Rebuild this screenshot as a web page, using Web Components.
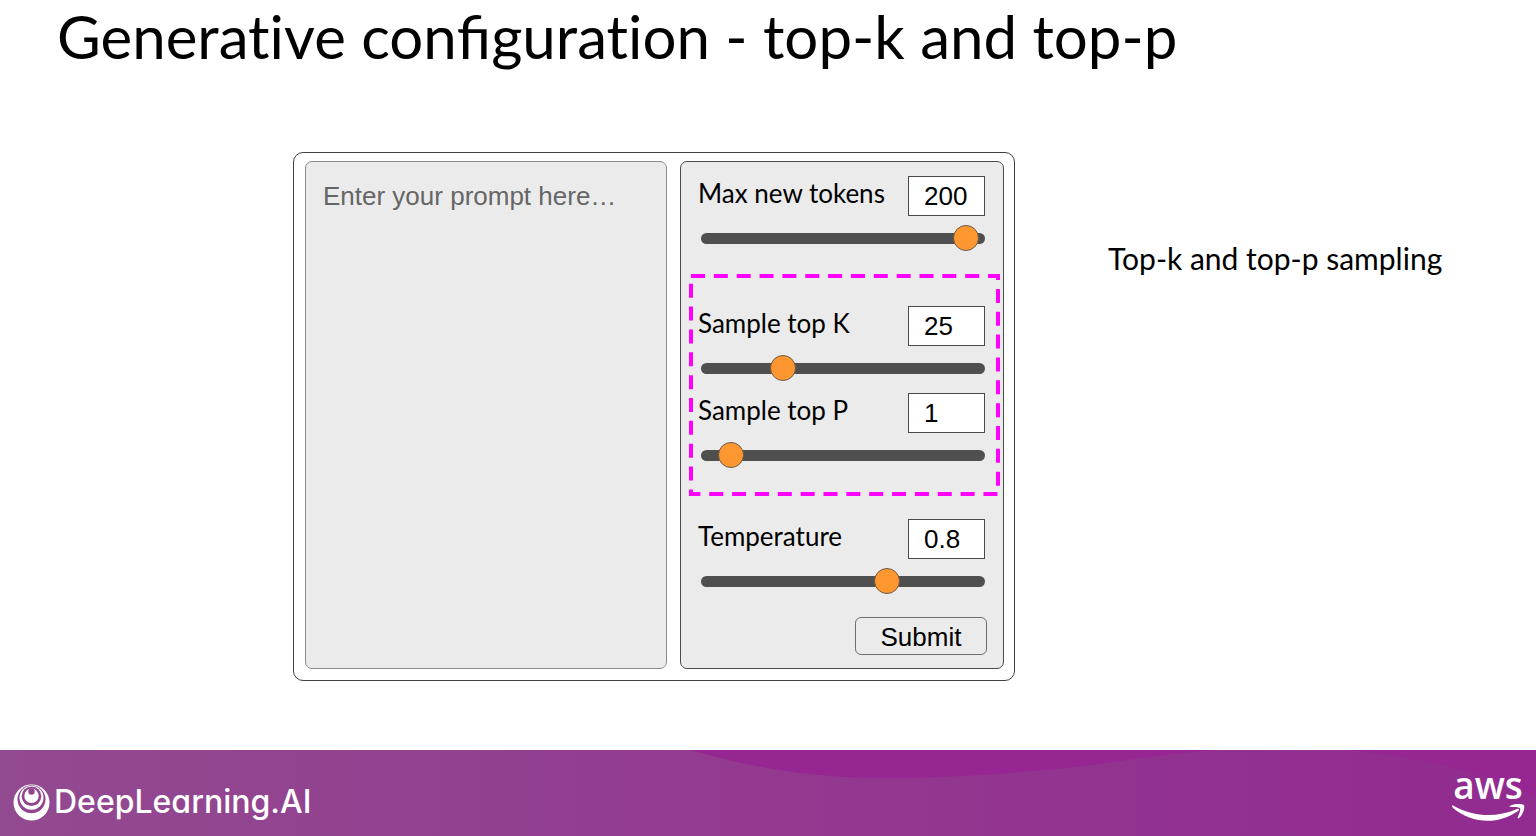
<!DOCTYPE html>
<html lang="en">
<head>
<meta charset="utf-8">
<meta name="viewport" content="width=device-width, initial-scale=1">
<title>Generative configuration - top-k and top-p</title>
<style>
  body { margin: 0; background: #fff; color: #000; font-family: Lato, "Liberation Sans", sans-serif; }
  h1 { font-variant-ligatures: none; }
  h1 span { font-variant-ligatures: normal; }
</style>
</head>
<body>
<config-slide>
  <h1 slot="title">Generative con<span>fi</span>guration - top-k and top-p</h1>
  <prompt-playground slot="figure">
    <prompt-box slot="prompt" placeholder="Enter your prompt here…"></prompt-box>
    <param-slider label="Max new tokens" value="200" max="205"></param-slider>
    <highlight-group>
      <param-slider label="Sample top K" value="25" max="93"></param-slider>
      <param-slider label="Sample top P" value="1" max="15"></param-slider>
    </highlight-group>
    <param-slider label="Temperature" value="0.8" max="1.19"></param-slider>
    <submit-button>Submit</submit-button>
  </prompt-playground>
  <p slot="caption">Top-k and top-p sampling</p>
  <brand-footer slot="footer"></brand-footer>
</config-slide>

<script>
class Base extends HTMLElement {
  constructor() {
    super();
    this.attachShadow({ mode: "open" });
  }
  connectedCallback() {
    this.shadowRoot.innerHTML = this.render();
  }
}

customElements.define("config-slide", class extends Base {
  render() {
    return `
    <style>
      :host { display: flex; flex-direction: column; min-height: 100vh; }
      header { padding: 0 57px; }
      ::slotted(h1) { margin: 0; font-size: 60px; line-height: 72px; font-weight: 400; }
      main {
        flex: 1; display: grid; align-items: start; padding: 80px 0 68px;
        grid-template-columns: 293fr minmax(0, 722fr) 93fr 428fr;
      }
      .figure { grid-column: 2; }
      .caption { grid-column: 4; padding-top: 88px; }
      ::slotted(p) { margin: 0; font-size: 30px; line-height: 36px; }
    </style>
    <header><slot name="title"></slot></header>
    <main>
      <div class="figure"><slot name="figure"></slot></div>
      <div class="caption"><slot name="caption"></slot></div>
    </main>
    <slot name="footer"></slot>`;
  }
});

customElements.define("prompt-playground", class extends Base {
  render() {
    return `
    <style>
      :host {
        display: grid; grid-template-columns: 362fr 324fr; gap: 13px;
        padding: 8px 10px 11px 11px; border: 1px solid #404040; border-radius: 10px; background: #fff;
      }
      section {
        display: flex; flex-direction: column; gap: 23px; padding: 14px 0 13px;
        border: 1px solid #4a4a4a; border-radius: 7px; background: #ebebeb;
      }
      ::slotted(param-slider) { margin: 0 18px 0 17px; }
      ::slotted(submit-button) { align-self: flex-end; margin-right: 16px; }
    </style>
    <slot name="prompt"></slot>
    <section><slot></slot></section>`;
  }
});

customElements.define("prompt-box", class extends Base {
  render() {
    return `
    <style>
      :host { display: grid; }
      textarea {
        box-sizing: border-box; width: 100%; height: 100%; margin: 0; padding: 18px 17px;
        border: 1px solid #8c8c8c; border-radius: 7px; background: #ebebeb; resize: none;
        font: 26px/32px "Liberation Sans", Arial, sans-serif; color: #000;
      }
      textarea::placeholder { color: #666; opacity: 1; }
    </style>
    <textarea aria-label="Prompt" placeholder="${this.getAttribute("placeholder")}"></textarea>`;
  }
});

customElements.define("param-slider", class extends Base {
  render() {
    const label = this.getAttribute("label");
    const value = this.getAttribute("value");
    const max = this.getAttribute("max");
    return `
    <style>
      :host { display: grid; gap: 9px; }
      .head { display: flex; justify-content: space-between; }
      label { font-size: 26px; line-height: 34px; white-space: nowrap; }
      #value {
        box-sizing: border-box; width: 77px; height: 40px; margin: 0; padding: 1px 0 0 15px;
        border: 1px solid #4a4a4a; border-radius: 0; background: #fff; color: #000;
        font: 26px/36px "Liberation Sans", Arial, sans-serif;
      }
      #range {
        -webkit-appearance: none; appearance: none; display: block;
        height: 26px; margin: 0 0 0 3px; background: none;
      }
      #range::-webkit-slider-runnable-track { height: 11px; border-radius: 6px; background: #4f4f4f; }
      #range::-webkit-slider-thumb {
        -webkit-appearance: none; box-sizing: border-box; width: 26px; height: 26px; margin-top: -8px;
        border: 1px solid #6b5a48; border-radius: 50%; background: #ff9730;
      }
      #range::-moz-range-track { height: 11px; border-radius: 6px; background: #4f4f4f; }
      #range::-moz-range-thumb {
        box-sizing: border-box; width: 26px; height: 26px;
        border: 1px solid #6b5a48; border-radius: 50%; background: #ff9730;
      }
    </style>
    <div class="head">
      <label for="value">${label}</label>
      <input id="value" type="text" inputmode="decimal" value="${value}">
    </div>
    <input id="range" type="range" min="0" max="${max}" step="any" value="${value}" aria-label="${label}">`;
  }
  connectedCallback() {
    super.connectedCallback();
    const box = this.shadowRoot.getElementById("value");
    const range = this.shadowRoot.getElementById("range");
    range.addEventListener("input", () => { box.value = Math.round(range.value * 10) / 10; });
    box.addEventListener("change", () => { range.value = box.value; });
  }
});

customElements.define("highlight-group", class extends Base {
  render() {
    return `
    <style>
      :host {
        position: relative; display: flex; flex-direction: column; gap: 12px;
        margin: 0 3px 0 8px; padding: 32px 15px 28px 9px;
      }
      svg { position: absolute; inset: 0; width: 100%; height: 100%; overflow: visible; pointer-events: none; }
    </style>
    <svg aria-hidden="true" fill="none"></svg>
    <slot></slot>`;
  }
  connectedCallback() {
    super.connectedCallback();
    const svg = this.shadowRoot.querySelector("svg");
    const draw = () => {
      const w = this.offsetWidth - 2, h = this.offsetHeight - 2;
      svg.innerHTML = `<path d="M2 2H${w}V${h}H2Z" stroke="#ff00ff" stroke-width="4" stroke-dasharray="14 8.85"/>`;
    };
    draw();
    new ResizeObserver(draw).observe(this);
  }
});

customElements.define("submit-button", class extends Base {
  render() {
    return `
    <style>
      :host { display: block; }
      button {
        display: block; box-sizing: border-box; width: 132px; height: 38px; margin: 0; padding: 2px 0 0;
        border: 1px solid #6e6e6e; border-radius: 6px; background: #ebebeb; color: #000;
        font: 26px/34px "Liberation Sans", Arial, sans-serif;
      }
    </style>
    <button type="button"><slot></slot></button>`;
  }
});

customElements.define("brand-footer", class extends Base {
  render() {
    return `
    <style>
      :host {
        position: relative; display: flex; justify-content: space-between; align-items: flex-start;
        box-sizing: border-box; height: 86px; padding: 0 12px 0 13px; overflow: hidden;
        background: linear-gradient(90deg, #924a90, #933b90 45%, #922b90); color: #fff;
      }
      .wave { position: absolute; inset: 0; width: 100%; height: 100%; }
      .dl { position: relative; display: flex; align-items: center; gap: 4px; padding-top: 32px; }
      .dl svg { width: 37px; height: 37px; }
      .dl span { font: 500 32px/40px Inter, sans-serif; font-feature-settings: "cv11"; }
      .aws { position: relative; width: 72px; padding-top: 15px; text-align: center; }
      .aws span { display: block; font: 600 37px/40px "Open Sans", sans-serif; }
      .aws svg { display: block; width: 72px; height: 18px; overflow: visible; }
    </style>
    <svg class="wave" viewBox="0 0 1536 86" preserveAspectRatio="none" aria-hidden="true">
      <path fill="#962691" d="M690 0C750 17 810 28 883 28C960 28 1040 22 1107 13C1150 7 1175 3 1215 0Z"/>
      <path fill="#962691" d="M1350 0C1420 7 1490 24 1536 47V0Z"/>
    </svg>
    <div class="dl">
      <svg viewBox="0 0 37 37" aria-hidden="true">
        <circle cx="18.500" cy="18.500" r="18" fill="#fff"/>
        <circle cx="18.500" cy="15.300" r="14" fill="#92458f"/>
        <circle cx="18.500" cy="13.800" r="12" fill="#fff"/>
        <circle cx="18.500" cy="12.200" r="9.800" fill="#92458f"/>
        <circle cx="18.500" cy="11.800" r="7.200" fill="#fff"/>
        <circle cx="18.500" cy="7.500" r="3.200" fill="#92458f"/>
      </svg>
      <span>DeepLearning.AI</span>
    </div>
    <div class="aws">
      <span>aws</span>
      <svg viewBox="0 0 72 18" fill="#fff" aria-hidden="true">
        <path d="M0 1C0 0 1 0 2 1C22 12 44 13 65 4C67 3 68 5 66 6C46 20 20 19 1 3Z"/>
        <path d="M58 1C62 -2 71 -1 72 0C73 3 71 10 67 13C66 14 65 13 66 12C67 9 69 5 68 3C67 2 62 2 59 2C58 2 57 2 58 1Z"/>
      </svg>
    </div>`;
  }
});
</script>
</body>
</html>
